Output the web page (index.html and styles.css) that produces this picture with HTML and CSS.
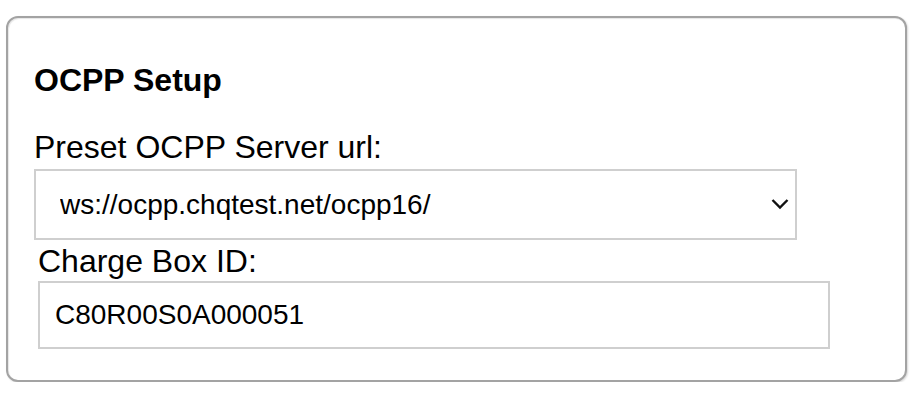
FILE: index.html
```html
<!DOCTYPE html>
<html lang="en">
<head>
    <meta charset="UTF-8">
    <meta name="viewport" content="width=device-width, initial-scale=1.0">
    <title>OCPP Setup</title>
    <link rel="stylesheet" href="styles.css">
</head>
<body>
    <div class="card">
        <h3 class="card-title">OCPP Setup</h3>
        <div class="field">
            <label class="field-label" for="ocppUrl">Preset OCPP Server url:</label>
            <div class="select-wrap">
                <select class="field-select" id="ocppUrl">
                    <option>ws://ocpp.chqtest.net/ocpp16/</option>
                </select>
                <svg class="select-arrow" width="18" height="12" viewBox="0 0 18 12">
                    <path d="M1.5 2 L9 9.5 L16.5 2" fill="none" stroke="#111" stroke-width="2.4"/>
                </svg>
            </div>
        </div>
        <div class="field field-indent">
            <label class="field-label" for="boxId">Charge Box ID:</label>
            <input class="field-input" id="boxId" type="text" value="C80R00S0A000051">
        </div>
    </div>
</body>
</html>
```

FILE: styles.css
```css
body {
    margin: 0;
    background: #fff;
    font-family: "Liberation Sans", Arial, sans-serif;
    color: #000;
}
.card {
    box-sizing: border-box;
    width: 901px;
    height: 366px;
    margin: 16px 0 0 6px;
    padding: 44px 0 0 26px;
    border: 2px solid #a3a3a3;
    border-radius: 12px;
    box-shadow: inset 1px 1px 1px #e6e6e6, 1px 1px 2px #d8d8d8;
    background: #fff;
}
.card-title {
    margin: 0;
    font-size: 32px;
    line-height: 36px;
    font-weight: bold;
}
.field {
    display: flex;
    flex-direction: column;
}
.field-label {
    font-size: 32px;
    line-height: 36px;
}
.field:first-of-type .field-label {
    margin-top: 31px;
    margin-bottom: 4px;
}
.field-indent {
    margin-left: 4px;
}
.field-indent .field-label {
    margin-top: 3px;
    margin-bottom: 2px;
}
.select-wrap {
    position: relative;
    width: 763px;
}
.field-select {
    box-sizing: border-box;
    width: 763px;
    height: 71px;
    padding: 0 40px 0 24px;
    border: 2px solid #cfcfcf;
    border-radius: 0;
    background: #fff;
    font-family: "Liberation Sans", Arial, sans-serif;
    font-size: 28px;
    color: #000;
    appearance: none;
    -webkit-appearance: none;
    outline: none;
}
.select-arrow {
    position: absolute;
    top: 29px;
    right: 8px;
    pointer-events: none;
}
.field-input {
    box-sizing: border-box;
    width: 792px;
    height: 68px;
    padding: 0 15px;
    border: 2px solid #cfcfcf;
    border-radius: 0;
    font-family: "Liberation Sans", Arial, sans-serif;
    font-size: 28px;
    color: #000;
    outline: none;
}
```
